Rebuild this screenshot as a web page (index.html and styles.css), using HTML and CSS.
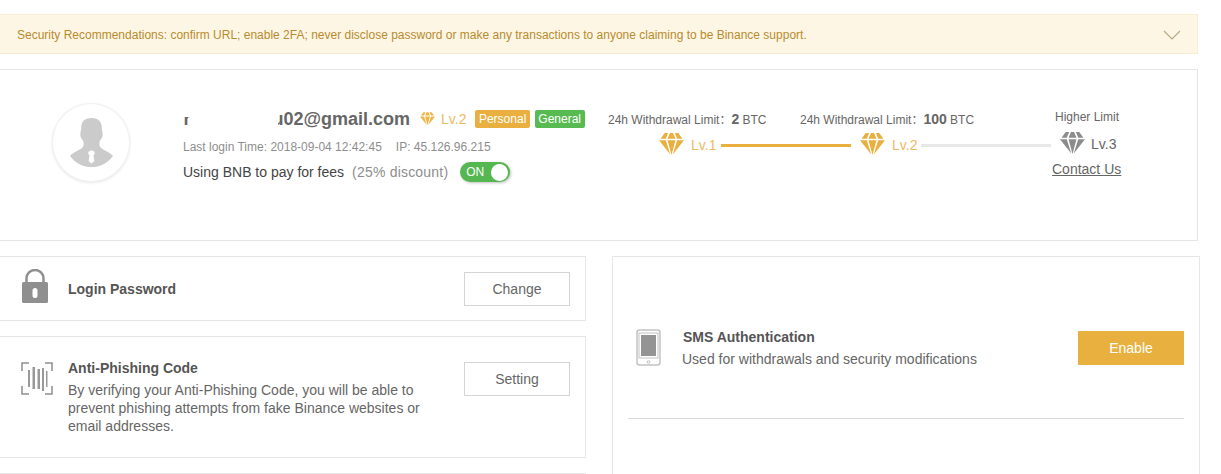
FILE: index.html
```html
<!DOCTYPE html>
<html lang="en">
<head>
    <meta charset="UTF-8">
    <meta name="viewport" content="width=device-width, initial-scale=1.0">
    <title>Account Security</title>
    <link rel="stylesheet" href="styles.css">
</head>
<body>

<div class="page">

    <!-- Security notice -->
    <div class="notice">
        <span class="notice-text">Security Recommendations: confirm URL; enable 2FA; never disclose password or make any transactions to anyone claiming to be Binance support.</span>
        <svg class="chevron" width="18" height="11" viewBox="0 0 18 11"><path d="M1 1l8 8 8-8" fill="none" stroke="#b9a785" stroke-width="1.2"/></svg>
    </div>

    <!-- Profile box -->
    <div class="profile">
        <div class="avatar">
            <svg width="43" height="49" viewBox="0 0 46 56" preserveAspectRatio="none">
                <path d="M23 0c8 0 11 5 11 11 0 3 1 5 1 8 0 3-2 5-3 7-1 3-1 6 1 8 3 3 9 5 13 9-4 7-13 13-23 13S4 50 0 43c4-4 10-6 13-9 2-2 2-5 1-8-1-2-3-4-3-7 0-3 1-5 1-8C12 5 15 0 23 0z" fill="#cbcbcb"/>
                <path d="M23 37c2 0 3.500 1.300 3.500 3 0 1.300-.8 2.200-1.400 2.800l1 6.200-3.100 3-3.100-3 1-6.200c-.6-.6-1.400-1.500-1.400-2.800 0-1.700 1.500-3 3.500-3z" fill="#fff"/>
            </svg>
        </div>

        <div class="user">
            <div class="user-top">
                <div class="email">hello.wrld.u02@gmail.com<span class="email-cover"></span></div>
                <svg class="gem-small" width="15" height="14" viewBox="0 0 24 22"><use href="#gem"/></svg>
                <span class="lv-gold">Lv.2</span>
                <span class="badge badge-gold">Personal</span>
                <span class="badge badge-green">General</span>
            </div>
            <div class="login-line">
                <span>Last login Time: 2018-09-04 12:42:45</span>
                <span>IP: 45.126.96.215</span>
            </div>
            <div class="bnb-line">
                <span>Using BNB to pay for fees</span>
                <span class="discount">(25% discount)</span>
                <div class="toggle"><span>ON</span><i class="knob"></i></div>
            </div>
        </div>

        <div class="limits">
            <div class="limit-labels">
                <div class="limit-one">24h Withdrawal Limit：<b>2</b> BTC</div>
                <div class="limit-two">24h Withdrawal Limit：<b>100</b> BTC</div>
                <div class="limit-three">Higher Limit</div>
            </div>
            <div class="levels">
                <svg width="25" height="23" viewBox="0 0 24 22"><use href="#gem"/></svg>
                <span class="lv-gold lv-name">Lv.1</span>
                <i class="line line-on"></i>
                <svg width="25" height="23" viewBox="0 0 24 22"><use href="#gem"/></svg>
                <span class="lv-gold lv-name">Lv.2</span>
                <i class="line line-rest"></i>
                <svg class="gem-grey" width="25" height="23" viewBox="0 0 24 22"><use href="#gem"/></svg>
                <span class="lv-name lv-grey">Lv.3</span>
            </div>
            <a class="contact" href="#">Contact Us</a>
        </div>
    </div>

    <div class="columns">
        <!-- Left column -->
        <div class="col-left">
            <div class="row row-login">
                <svg class="row-icon" width="26" height="34" viewBox="0 0 26 34">
                    <path d="M4.500 13V9.500a8.500 8.500 0 0 1 17 0V13" fill="none" stroke="#8f8f8f" stroke-width="2.500"/>
                    <path d="M1.500 13h23a1.500 1.500 0 0 1 1.500 1.500v18a1.500 1.500 0 0 1-1.500 1.500h-23A1.500 1.500 0 0 1 0 32.500v-18A1.500 1.500 0 0 1 1.500 13z" fill="#8f8f8f"/>
                    <rect x="10.500" y="19" width="5" height="10" rx="2.500" fill="#fff"/>
                </svg>
                <div class="row-text">
                    <div class="row-title">Login Password</div>
                </div>
                <a class="btn" href="#">Change</a>
            </div>

            <div class="row row-code">
                <svg class="row-icon" width="32" height="33" viewBox="0 0 32 33">
                    <path d="M1 9V1h7M24 1h7v8M1 24v8h7M24 32h7v-8" fill="none" stroke="#8f8f8f" stroke-width="1.500"/>
                    <path d="M7 8h2v17H7zM11.500 5h2.500v22h-2.500zM16.500 7h2.500v20h-2.500zM21 6h2v23h-2zM25 9h1.500v16H25z" fill="#999"/>
                </svg>
                <div class="row-text">
                    <div class="row-title">Anti-Phishing Code</div>
                    <p class="row-desc">By verifying your Anti-Phishing Code, you will be able to prevent phishing attempts from fake Binance websites or email addresses.</p>
                </div>
                <a class="btn" href="#">Setting</a>
            </div>

            <div class="row row-next"></div>
        </div>

        <!-- Right column -->
        <div class="col-right">
            <div class="sms">
                <svg class="sms-icon" width="25" height="37" viewBox="0 0 25 37">
                    <rect x="1" y="1" width="23" height="35" rx="2.500" fill="none" stroke="#c2c2c2" stroke-width="1.500"/>
                    <rect x="3" y="4" width="19" height="25" fill="none" stroke="#c2c2c2"/>
                    <rect x="5" y="6" width="15" height="21" fill="#949494"/>
                    <circle cx="12.500" cy="33" r="1.300" fill="none" stroke="#c2c2c2"/>
                </svg>
                <div class="sms-text">
                    <div class="row-title">SMS Authentication</div>
                    <div class="sms-desc">Used for withdrawals and security modifications</div>
                </div>
                <a class="btn btn-gold" href="#">Enable</a>
            </div>
            <div class="divider"></div>
        </div>
    </div>
</div>

<!-- Diamond used by the level markers -->
<svg class="defs" width="0" height="0">
    <defs>
        <g id="gem">
            <path d="M5.500 0h3.300L6.500 5.500H1.500zM10.500 0h3l2.300 5.500H8.200zM15.200 0h3.300l4 5.500h-5zM0 7h6.500l4.300 13.500zM8.200 7h7.600L12 21zM17.500 7H24L13.200 20.500z" fill="currentColor"/>
        </g>
    </defs>
</svg>

</body>
</html>
```

FILE: styles.css
```css
/* General */
body {
    margin: 0;
    font-family: "Liberation Sans", Arial, sans-serif;
    color: #666;
    background-color: #fff;
    overflow: hidden;
}

a {
    color: inherit;
}

.page {
    width: 1208px;
    height: 474px;
    margin-left: -10px;
    padding-top: 14px;
    box-sizing: border-box;
}

.defs {
    position: absolute;
}

/* Security notice */
.notice {
    height: 40px;
    box-sizing: border-box;
    padding: 0 16px 0 26px;
    display: flex;
    align-items: center;
    justify-content: space-between;
    font-size: 12px;
    color: #b98b2d;
    background-color: #fef6e5;
    border: 1px solid #f8ecd2;
}

.notice-text {
    margin-top: 2px;
}

.chevron {
    margin-top: 2px;
}

/* Profile box */
.profile {
    height: 172px;
    margin-top: 15px;
    box-sizing: border-box;
    border: 1px solid #e6e6e6;
    display: flex;
    align-items: flex-start;
    padding-top: 33px;
    padding-left: 61px;
}

.avatar {
    width: 78px;
    height: 79px;
    flex: none;
    border-radius: 50%;
    background-color: #fff;
    border: 1px solid #f1f1f1;
    box-shadow: 0 1px 3px rgba(0, 0, 0, 0.1);
    box-sizing: border-box;
    display: flex;
    align-items: center;
    justify-content: center;
}

.user {
    width: 425px;
    flex: none;
    margin-left: 53px;
}

.user-top {
    display: flex;
    align-items: center;
    height: 26px;
    margin-top: 3px;
}

.email {
    position: relative;
    width: 227px;
    margin-right: 10px;
    font-size: 18px;
    font-weight: bold;
    color: #666;
    text-align: right;
    white-space: nowrap;
    flex: none;
}

/* The address is blanked out in the original */
.email-cover {
    position: absolute;
    left: 7px;
    top: -2px;
    width: 88px;
    height: 26px;
    background-color: #fff;
}

.email-cover::before {
    content: "";
    position: absolute;
    left: -8px;
    top: 0;
    width: 8px;
    height: 10px;
    background-color: #fff;
}

.gem-small {
    color: #efb445;
    margin-right: 6px;
}

.lv-gold {
    color: #eeb966;
    font-size: 14px;
}

.badge {
    height: 18px;
    line-height: 18px;
    padding: 0 3.5px;
    border-radius: 2px;
    color: #fff;
    font-size: 12px;
}

.badge-gold {
    margin-left: 9px;
    background-color: #e9b03f;
}

.badge-green {
    margin-left: 5px;
    background-color: #58bb52;
}

.login-line {
    display: flex;
    gap: 14px;
    margin-top: 8px;
    font-size: 12px;
    color: #8e8e8e;
}

.bnb-line {
    display: flex;
    align-items: center;
    margin-top: 8px;
    font-size: 14px;
    color: #444;
}

.discount {
    margin-left: 8px;
    color: #8e8e8e;
    letter-spacing: 0.2px;
}

.toggle {
    width: 50px;
    height: 20px;
    margin-left: 12px;
    padding: 0 2px 0 6px;
    box-sizing: border-box;
    border-radius: 10px;
    background-color: #55b74f;
    box-shadow: 1px 1px 3px rgba(0, 0, 0, 0.25);
    color: #fff;
    font-size: 12px;
    display: flex;
    align-items: center;
    justify-content: space-between;
}

.knob {
    width: 17px;
    height: 17px;
    border-radius: 50%;
    background-color: #fff;
}

/* Withdrawal limits */
.limits {
    width: 530px;
    flex: none;
    font-family: "Liberation Sans", "Noto Sans CJK SC", sans-serif;
    font-size: 12px;
    color: #666;
}

.limit-labels {
    display: flex;
    height: 30px;
    padding-top: 7px;
    box-sizing: border-box;
}

.limit-labels b {
    font-size: 14px;
}

.limit-one {
    width: 192px;
}

.limit-two {
    width: 255px;
}

.levels {
    display: flex;
    align-items: center;
    height: 23px;
    padding-left: 51px;
    color: #e9b03f;
}

.lv-name {
    width: 30px;
    margin-left: 7px;
    font-size: 14px;
}

.lv-grey {
    margin-left: 6px;
    margin-top: -2px;
    color: #666;
}

.gem-grey {
    color: #8c8c8c;
    margin-top: -2px;
}

.line {
    width: 130px;
    height: 3px;
    margin: 2px 9px 0 0;
    background-color: #e8e8e8;
}

.line-on {
    background-color: #e9b03f;
}

.line-rest {
    margin-left: -1px;
}

.contact {
    display: block;
    margin-top: 5px;
    padding-left: 444px;
    font-size: 14px;
}

/* Bottom columns */
.columns {
    display: flex;
    align-items: flex-start;
    margin-top: 15px;
}

.col-left {
    width: 596px;
    flex: none;
}

.row {
    border: 1px solid #e6e6e6;
    box-sizing: border-box;
    display: flex;
    padding-left: 31px;
    padding-right: 15px;
    margin-bottom: 15px;
}

.row-login {
    height: 65px;
    align-items: center;
}

.row-login .row-icon {
    margin-top: -6px;
}

.row-code {
    height: 122px;
    padding-top: 25px;
}

.row-code .row-icon {
    margin-left: -1px;
}

.row-next {
    height: 1px;
    margin-bottom: 0;
    border-width: 1px 1px 0 1px;
}

.row-icon {
    flex: none;
}

.row-text {
    flex: 1;
    margin-left: 20px;
}

.row-code .row-text {
    margin-left: 15px;
    margin-top: -2px;
}

.row-title {
    font-size: 14px;
    font-weight: bold;
    color: #555;
}

.row-desc {
    width: 360px;
    margin: 5px 0 0;
    font-size: 14px;
    line-height: 18px;
    color: #666;
}

.btn {
    width: 106px;
    height: 34px;
    flex: none;
    box-sizing: border-box;
    border: 1px solid #d4d4d4;
    font-size: 14px;
    color: #666;
    text-decoration: none;
    display: flex;
    align-items: center;
    justify-content: center;
}

.btn-gold {
    border: none;
    color: #fff;
    background-color: #e8b13f;
}

.col-right {
    width: 588px;
    height: 218px;
    margin-left: 26px;
    flex: none;
    box-sizing: border-box;
    border: 1px solid #e6e6e6;
    border-bottom: none;
    padding: 0 15px;
}

.sms {
    display: flex;
    align-items: center;
    height: 161px;
    padding-top: 21px;
    box-sizing: border-box;
}

.sms-icon {
    margin-left: 8px;
    margin-top: -2px;
    flex: none;
}

.sms-text {
    flex: 1;
    margin-left: 22px;
}

.sms-desc {
    margin-top: 6px;
    margin-left: -1px;
    font-size: 14px;
    color: #666;
}

.divider {
    height: 1px;
    background-color: #d9d9d9;
}
```
